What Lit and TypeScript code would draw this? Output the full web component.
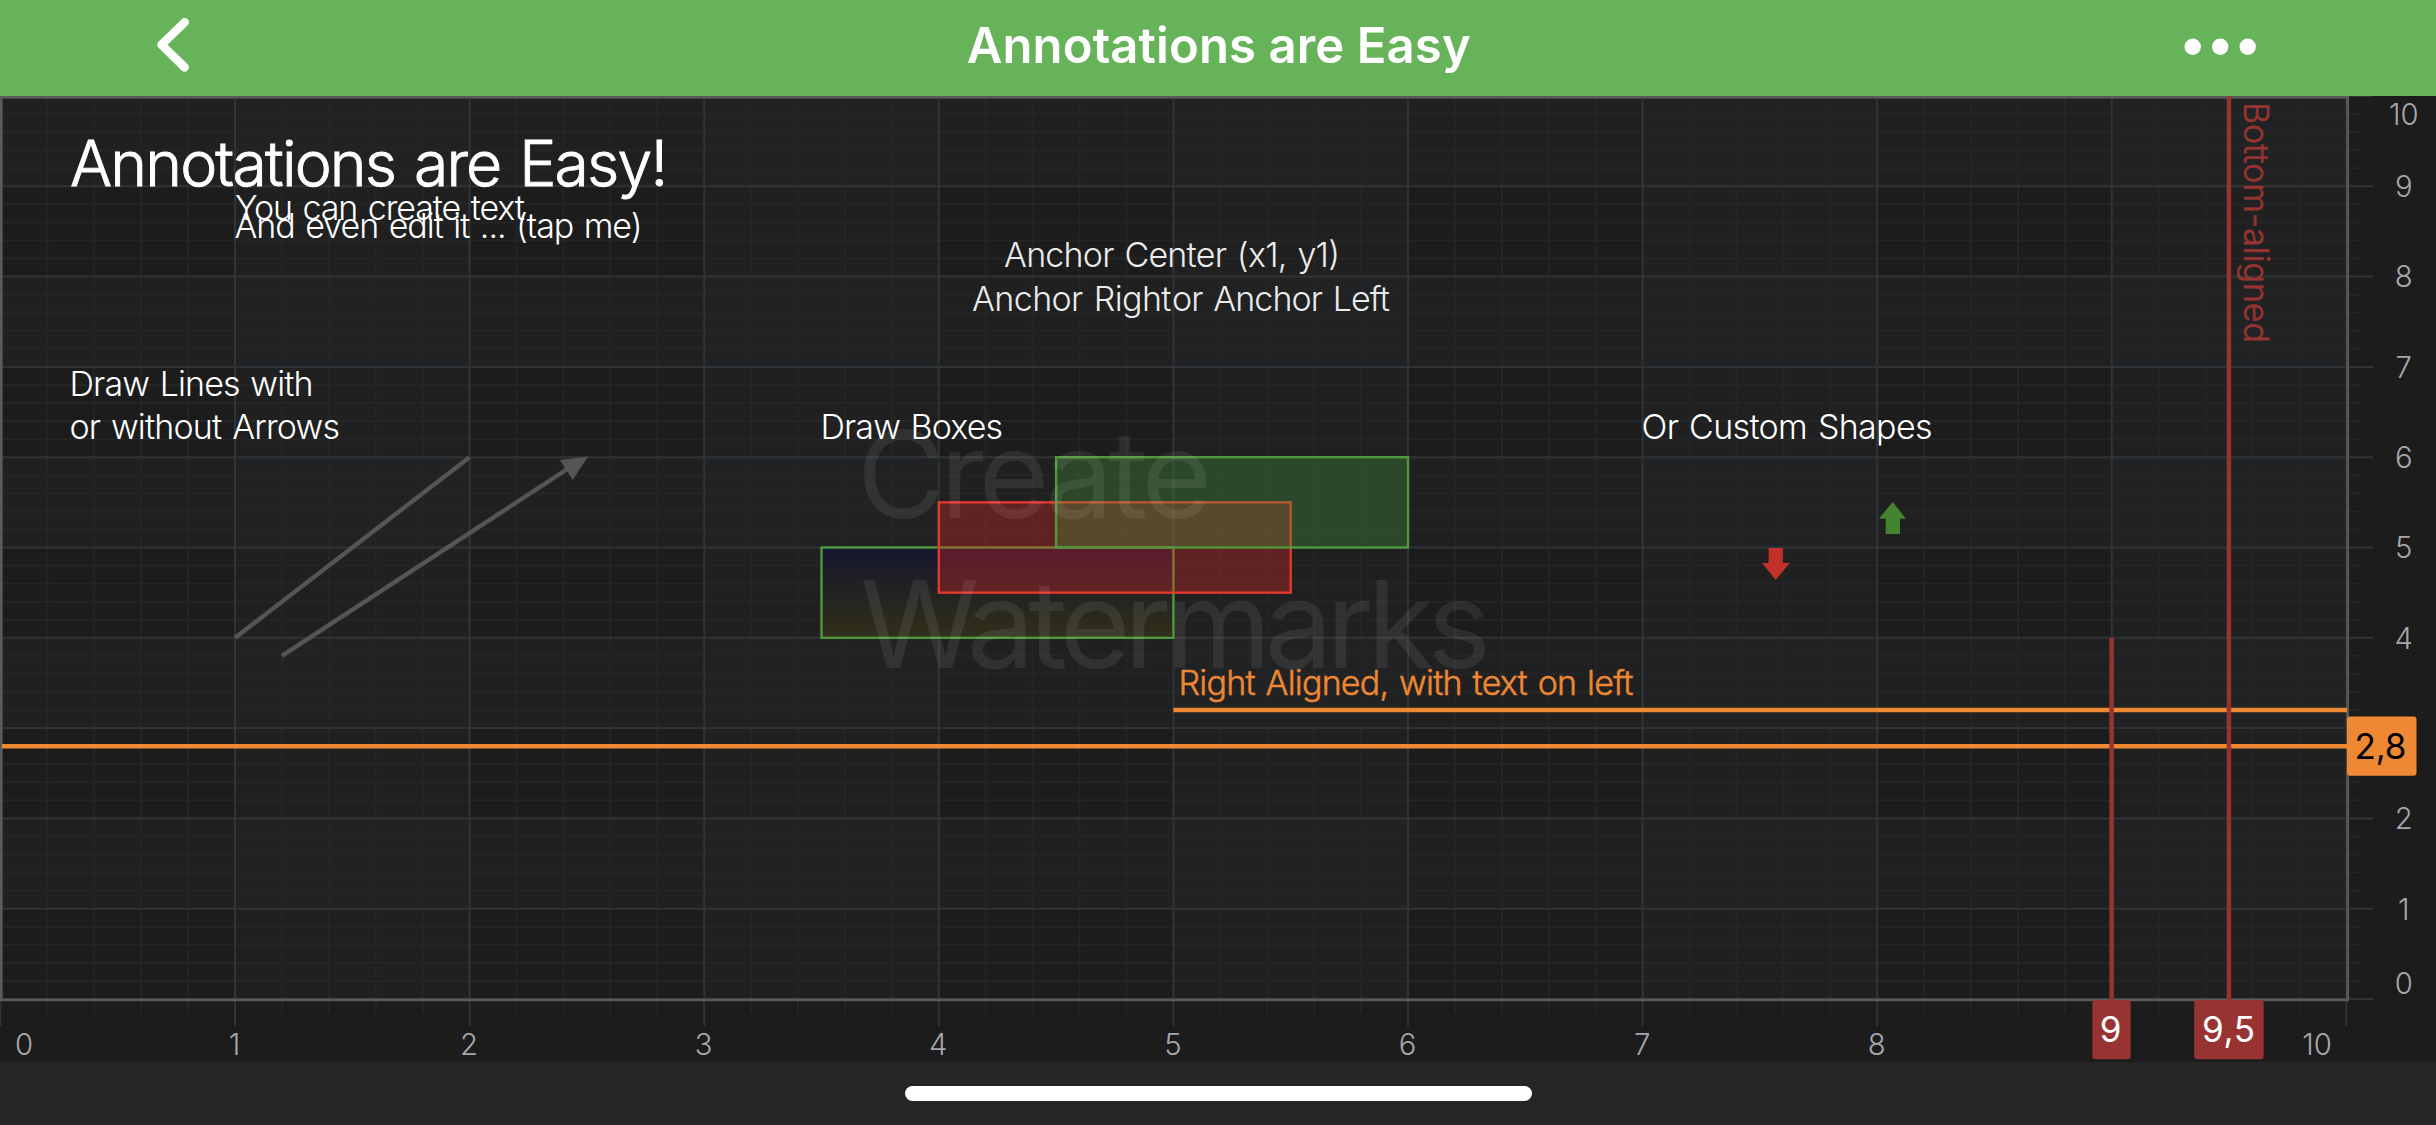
import { LitElement, html, svg, css } from "lit";
import { customElement } from "lit/decorators.js";

const UNIT_X = 234.6;
const UNIT_Y = 90.3;
const BASE_Y = 903;

/** Chart value to pixel, measured from the chart's top left corner. */
const px = (v: number) => v * UNIT_X + 0.4;
const py = (v: number) => BASE_Y - v * UNIT_Y;

interface Note {
  text: string;
  x: number;
  y: number;
  width: number;
  kind: string;
}

const NOTES: Note[] = [
  { text: "Annotations are Easy!", x: 70, y: 90, width: 598, kind: "headline" },
  { text: "You can create text", x: 235, y: 124, width: 290, kind: "note" },
  { text: "And even edit it ... (tap me)", x: 234.5, y: 142, width: 408, kind: "note" },
  { text: "Anchor Center (x1, y1)", x: 1004, y: 171.3, width: 336, kind: "note soft" },
  { text: "Anchor Right", x: 972, y: 214.7, width: 199.5, kind: "note soft" },
  { text: "or Anchor Left", x: 1172, y: 214.7, width: 218, kind: "note soft" },
  { text: "Draw Lines with", x: 69.5, y: 299.7, width: 244, kind: "note" },
  { text: "or without Arrows", x: 69.5, y: 342.7, width: 270.5, kind: "note" },
  { text: "Draw Boxes", x: 820.5, y: 343, width: 182.5, kind: "note" },
  { text: "Or Custom Shapes", x: 1641.5, y: 343, width: 291, kind: "note" },
  { text: "Right Aligned, with text on left", x: 1178.5, y: 598.7, width: 455, kind: "note orange" },
];

@customElement("chart-surface")
export class ChartSurface extends LitElement {
  static styles = css`
    :host { display: block; height: 966px; background: #1c1c1c; }
    svg { display: block; font-family: Inter, "Liberation Sans", sans-serif; }
    .band { fill: #202020; }
    .cross { fill: #202224; }
    .minor { stroke: #232527; stroke-width: 2; }
    .major { stroke: #303437; stroke-width: 2; }
    .frame { fill: none; stroke: #5a5b5d; stroke-width: 2.6; }
    .axis { fill: #a6a6ac; font-size: 29.3px; font-weight: 300; text-anchor: middle; }
    .headline {
      fill: #fff;
      stroke: #fff;
      stroke-width: 0.9;
      font-size: 62.5px;
      font-weight: 300;
      word-spacing: 3px;
    }
    .note { fill: #fff; font-size: 34px; font-weight: 300; word-spacing: 2px; }
    .note.soft { fill: #ececec; }
    .note.orange { fill: #ee8832; stroke: #ee8832; stroke-width: 0.5; }
    .note.brick { fill: #973431; stroke: #973431; stroke-width: 0.6; }
    .orange { fill: #ee8832; }
    .brick { fill: #973431; }
    .watermark { fill: #fff; fill-opacity: 0.08; font-size: 121px; font-weight: 400; }
    .pen { stroke: #555; stroke-width: 4.4; fill: none; }
    .head { fill: #555; }
    .box { stroke-width: 2.4; }
    .box.fade { fill: url(#fade); stroke: #51973c; }
    .box.red { fill: #f82828; fill-opacity: 0.3; stroke: #e6372d; }
    .box.green { fill: #48a33a; fill-opacity: 0.3; stroke: #51973c; }
    .up { fill: #44832f; }
    .down { fill: #c23128; }
    .hline { stroke: #ee8832; stroke-width: 4.5; }
    .vline { stroke: #973431; stroke-width: 4.5; }
    .tag { font-size: 35px; font-weight: 400; fill: #fff; text-anchor: middle; }
    .tag.dark { fill: #000; }
  `;

  private bands() {
    const odd = [1, 3, 5, 7, 9];
    return svg`
      ${odd.map((v) => svg`<rect class="band" x=${px(v)} y="0" width=${UNIT_X} height=${BASE_Y}></rect>`)}
      ${odd.map((v) => svg`<rect class="band" x="0" y=${py(v + 1)} width=${px(10)} height=${UNIT_Y}></rect>`)}
      ${odd.map((v) =>
        odd.map(
          (w) => svg`<rect class="cross" x=${px(v)} y=${py(w + 1)} width=${UNIT_X} height=${UNIT_Y}></rect>`,
        ),
      )}`;
  }

  private gridLines() {
    const steps = Array.from({ length: 51 }, (_, i) => i);
    const minor = steps.filter((i) => i % 5 !== 0);
    const major = steps.filter((i) => i % 5 === 0);
    const line = (i: number, cls: string, right: number, bottom: number) => svg`
      <line class=${cls} x1=${px(i / 5)} x2=${px(i / 5)} y1="0" y2=${bottom}></line>
      <line class=${cls} x1="0" x2=${right} y1=${py(i / 5)} y2=${py(i / 5)}></line>`;
    return svg`
      ${minor.map((i) => line(i, "minor", 2361, 917.7))}
      ${major.map((i) => line(i, "major", 2373, 929.7))}`;
  }

  private axisLabels() {
    const xs = [0, 1, 2, 3, 4, 5, 6, 7, 8, 10];
    const ys = [0, 1, 2, 4, 5, 6, 7, 8, 9, 10];
    const xAt = (v: number) => (v === 0 ? 24 : v === 10 ? 2317 : px(v) - 0.5);
    const yAt = (v: number) => (v === 0 ? 897.5 : v === 10 ? 29 : py(v) + 10.8);
    return svg`
      ${xs.map((v) => svg`<text class="axis" x=${xAt(v)} y="958.6">${v}</text>`)}
      ${ys.map((v) => svg`<text class="axis" x="2403.8" y=${yAt(v)}>${v}</text>`)}`;
  }

  private box(cls: string, x1: number, x2: number, yTop: number) {
    return svg`<rect class="box ${cls}" x=${px(x1)} y=${py(yTop)}
      width=${(x2 - x1) * UNIT_X} height=${UNIT_Y}></rect>`;
  }

  render() {
    return html`
      <svg width="2436" height="966" viewBox="0 0 2436 966">
        <defs>
          <linearGradient id="fade" x1="0" y1="0" x2="0" y2="1">
            <stop offset="0" stop-color="#161632"></stop>
            <stop offset="0.5" stop-color="#222222"></stop>
            <stop offset="1" stop-color="#31301a"></stop>
          </linearGradient>
        </defs>
        ${this.bands()} ${this.gridLines()}
        <rect class="frame" x="1.3" y="1.3" width="2346.4" height="902.6"></rect>
        ${this.axisLabels()}

        <line class="pen" x1=${px(1)} y1=${py(4)} x2=${px(2)} y2=${py(6)}></line>
        <line class="pen" x1=${px(1.2)} y1=${py(3.8)} x2="572" y2="370"></line>
        <path class="head" d="M588 360.5 L560 364 L572.7 384 Z"></path>

        ${this.box("fade", 3.5, 5, 5)} ${this.box("red", 4, 5.5, 5.5)}
        ${this.box("green", 4.5, 6, 6)}

        <path class="up" d="M1892.7 406 L1906 422.7 H1900 V438 H1885.7 V422.7 H1879 Z"></path>
        <path class="down" d="M1768.6 452 H1782.8 V467 H1789.6 L1775.7 484 L1762 467 H1768.6 Z"></path>

        <text class="watermark" x="857" y="421.7" textLength="355">Create</text>
        <text class="watermark" x="860" y="572.3" textLength="631">Watermarks</text>

        ${NOTES.map(
          (n) => svg`<text class=${n.kind} x=${n.x} y=${n.y} textLength=${n.width}>${n.text}</text>`,
        )}

        <line class="hline" x1=${px(5)} x2="2347" y1=${py(3.2)} y2=${py(3.2)}></line>
        <line class="hline" x1="2" x2="2347" y1=${py(2.8)} y2=${py(2.8)}></line>
        <rect class="orange" x="2347" y="620.5" width="69.5" height="59.2" rx="3"></rect>
        <text class="tag dark" x="2380.5" y="662.6" textLength="52">2,8</text>

        <line class="vline" x1=${px(9) - 0.2} x2=${px(9) - 0.2} y1=${py(4)} y2="904"></line>
        <line class="vline" x1=${px(9.5) - 0.2} x2=${px(9.5) - 0.2} y1="0.5" y2="904"></line>
        <text class="note brick" transform="translate(2244 6) rotate(90)" textLength="241">Bottom-aligned</text>
        <rect class="brick" x="2092.4" y="904" width="38.3" height="59.2" rx="3"></rect>
        <text class="tag" x="2110.7" y="945.6">9</text>
        <rect class="brick" x="2194.2" y="904" width="69.4" height="59.2" rx="3"></rect>
        <text class="tag" x="2228.5" y="945.6" textLength="53">9,5</text>
      </svg>
    `;
  }
}

@customElement("app-root")
export class AppRoot extends LitElement {
  static styles = css`
    :host {
      display: flex;
      flex-direction: column;
      width: 2436px;
      height: 1125px;
      overflow: hidden;
      background: #252525;
    }
    .bar {
      display: grid;
      grid-template-columns: 1fr auto 1fr;
      align-items: center;
      height: 96px;
      box-sizing: border-box;
      padding: 0 153px;
      background: #66b359;
    }
    .icon { display: block; }
    .more { justify-self: end; }
    .title {
      font: 600 49px/1 Inter, "Liberation Sans", sans-serif;
      color: #fff;
      letter-spacing: 0.12px;
      transform: translate(0.8px, -3px);
    }
    .home { flex: 1; display: flex; justify-content: center; padding-top: 24px; }
    .pill { width: 627px; height: 15px; border-radius: 7.5px; background: #fff; }
  `;

  render() {
    return html`
      <header class="bar">
        <svg class="icon" width="40" height="96" viewBox="153 0 40 96" fill="none"
          stroke="#fff" stroke-width="8.5" stroke-linecap="round" stroke-linejoin="round">
          <path d="M184.7 22.3 L161.5 44.8 L184.7 67.4"></path>
        </svg>
        <div class="title">Annotations are Easy</div>
        <svg class="icon more" width="103" height="96" viewBox="2180 0 103 96" fill="#fff">
          <circle cx="2192.7" cy="46.8" r="8.2"></circle>
          <circle cx="2220.2" cy="46.8" r="8.2"></circle>
          <circle cx="2247.7" cy="46.8" r="8.2"></circle>
        </svg>
      </header>
      <chart-surface></chart-surface>
      <footer class="home"><div class="pill"></div></footer>
    `;
  }
}
